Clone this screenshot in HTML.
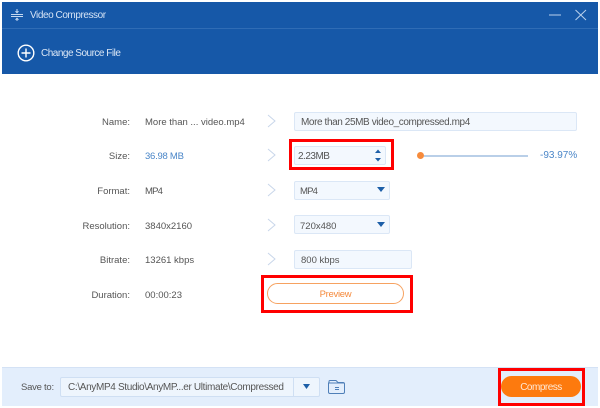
<!DOCTYPE html>
<html>
<head>
<meta charset="utf-8">
<style>
html,body{margin:0;padding:0;background:#fff}
#p{position:relative;width:600px;height:408px;overflow:hidden;background:#fff;font-family:"Liberation Sans",sans-serif;font-size:9.5px;color:#555}
#p div,#p svg{position:absolute}
.t{white-space:nowrap;line-height:12px;height:12px}
.r{text-align:right;width:100px;left:30px}
.v{left:145px}
.box{background:#f3f8fe;border:1px solid #dbe7f6;border-radius:2px;box-sizing:border-box}
.red{border:3px solid #f00;box-sizing:border-box}
</style>
</head>
<body>
<div id="p">
<div style="left:2px;top:2px;width:596px;height:72px;background:#1658a8"></div>
<div style="left:2px;top:28px;width:596px;height:1px;background:#2f6cb5"></div>
<svg style="left:10px;top:8px" width="14" height="14" viewBox="0 0 14 14" fill="none" stroke="#c6d9f0" stroke-width="1"><path d="M1 6.5H13M1 8.5H13"/><path d="M7 1V4.5M5.5 3.2L7 4.8L8.5 3.2M7 13V10.5M5.5 11.8L7 10.2L8.5 11.8"/></svg>
<div class="t" style="left:30px;top:10px;color:#d5e3f5;font-size:10px;letter-spacing:-.44px">Video Compressor</div>
<svg style="left:548px;top:8px" width="40" height="14" viewBox="0 0 40 14" fill="none" stroke="#b9d0ec" stroke-width="1"><path d="M1 7H13"/><path d="M27.5 2L38 12M38 2L27.5 12"/></svg>
<svg style="left:17px;top:43.5px" width="18" height="18" viewBox="0 0 18 18" fill="none" stroke="#fff" stroke-width="1.4"><circle cx="9" cy="9" r="7.8"/><path d="M9 4.5V13.5M4.5 9H13.5"/></svg>
<div class="t" style="left:41px;top:48px;color:#dbe7f6;font-size:10px;letter-spacing:-.5px">Change Source File</div>

<div class="t r" style="top:117px">Name:</div>
<div class="t v" style="top:117px">More than ... video.mp4</div>
<div class="t r" style="top:151px">Size:</div>
<div class="t v" style="top:151px;color:#4a86c8;letter-spacing:-.25px">36.98 MB</div>
<div class="t r" style="top:186px">Format:</div>
<div class="t v" style="top:186px;letter-spacing:-.8px">MP4</div>
<div class="t r" style="top:221px">Resolution:</div>
<div class="t v" style="top:221px">3840x2160</div>
<div class="t r" style="top:255px">Bitrate:</div>
<div class="t v" style="top:255px">13261 kbps</div>
<div class="t r" style="top:290px">Duration:</div>
<div class="t v" style="top:290px">00:00:23</div>

<svg style="left:267px;top:114px" width="12" height="152" viewBox="0 0 12 152" fill="none" stroke="#c8d6ea" stroke-width="1"><path d="M1 1L8 7L1 13"/><path d="M1 35L8 41L1 47"/><path d="M1 70L8 76L1 82"/><path d="M1 105L8 111L1 117"/><path d="M1 139L8 145L1 151"/></svg>

<div class="box" style="left:294px;top:112px;width:283px;height:19px"></div>
<div class="t" style="left:301px;top:117px;font-size:10px;letter-spacing:-.4px">More than 25MB video_compressed.mp4</div>
<div class="red" style="left:289px;top:139px;width:105px;height:31px"></div>
<div class="box" style="left:294px;top:146px;width:92px;height:19px"></div>
<div class="t" style="left:298px;top:151px;font-size:10px;letter-spacing:-.5px">2.23MB</div>
<svg style="left:373px;top:148px" width="10" height="15" viewBox="0 0 10 15"><path d="M2 5L5 1.5L8 5Z" fill="#1d5fa8"/><path d="M2 10H8L5 13.5Z" fill="#1d5fa8"/></svg>
<div style="left:424px;top:155px;width:104px;height:2px;background:#b9cfe8"></div>
<div style="left:417px;top:152px;width:7px;height:7px;border-radius:50%;background:#f68b3c"></div>
<div class="t" style="left:540px;top:150px;color:#4a86c8;font-size:10px">-93.97%</div>

<div class="box" style="left:294px;top:181px;width:96px;height:19px"></div>
<div class="t" style="left:300px;top:186px;letter-spacing:-.8px">MP4</div>
<svg style="left:377px;top:187px" width="8" height="5" viewBox="0 0 8 5"><path d="M0 0H8L4 5Z" fill="#1d5fa8"/></svg>
<div class="box" style="left:294px;top:215px;width:96px;height:19px"></div>
<div class="t" style="left:300px;top:221px">720x480</div>
<svg style="left:377px;top:222px" width="8" height="5" viewBox="0 0 8 5"><path d="M0 0H8L4 5Z" fill="#1d5fa8"/></svg>
<div class="box" style="left:294px;top:250px;width:118px;height:19px"></div>
<div class="t" style="left:301px;top:255px">800 kbps</div>

<div class="red" style="left:261px;top:275px;width:152px;height:38px"></div>
<div style="left:267px;top:283px;width:137px;height:21px;box-sizing:border-box;border:1px solid #f6a261;border-radius:11px"></div>
<div class="t" style="left:267px;top:289px;width:137px;text-align:center;color:#f58a3c;letter-spacing:-.3px">Preview</div>

<div style="left:2px;top:367px;width:596px;height:39px;background:#e3eefc;border-top:1px solid #d4e2f5;box-sizing:border-box"></div>
<div class="t" style="left:21px;top:382px;letter-spacing:-.25px">Save to:</div>
<div class="box" style="left:60px;top:377px;width:260px;height:20px;background:#eef5fd;border-color:#cfdff3"></div>
<div style="left:293px;top:377px;width:1px;height:20px;background:#cfdff3"></div>
<div class="t" style="left:68px;top:382px;font-size:10px;letter-spacing:-.34px">C:\AnyMP4 Studio\AnyMP...er Ultimate\Compressed</div>
<svg style="left:303px;top:384px" width="7" height="5" viewBox="0 0 7 5"><path d="M0 0H7L3.5 5Z" fill="#1d5fa8"/></svg>
<svg style="left:327px;top:379px" width="19" height="16" viewBox="0 0 19 16" fill="none" stroke="#4f7fb8" stroke-width="1"><path d="M2 4V2.5Q2 1.5 3 1.5H9L11 3.5H16Q17.5 3.5 17.5 5V13Q17.5 14.5 16 14.5H3Q1.5 14.5 1.5 13V4H17"/><path d="M8 8.5H12M8 10.5H12"/></svg>

<div class="red" style="left:498px;top:368px;width:87px;height:38px"></div>
<div style="left:501px;top:376px;width:80px;height:21px;border-radius:11px;background:#fd7a0e"></div>
<div class="t" style="left:501px;top:382px;width:80px;text-align:center;color:#ffe9d6;font-size:10px;letter-spacing:-.5px">Compress</div>
</div>
</body>
</html>
